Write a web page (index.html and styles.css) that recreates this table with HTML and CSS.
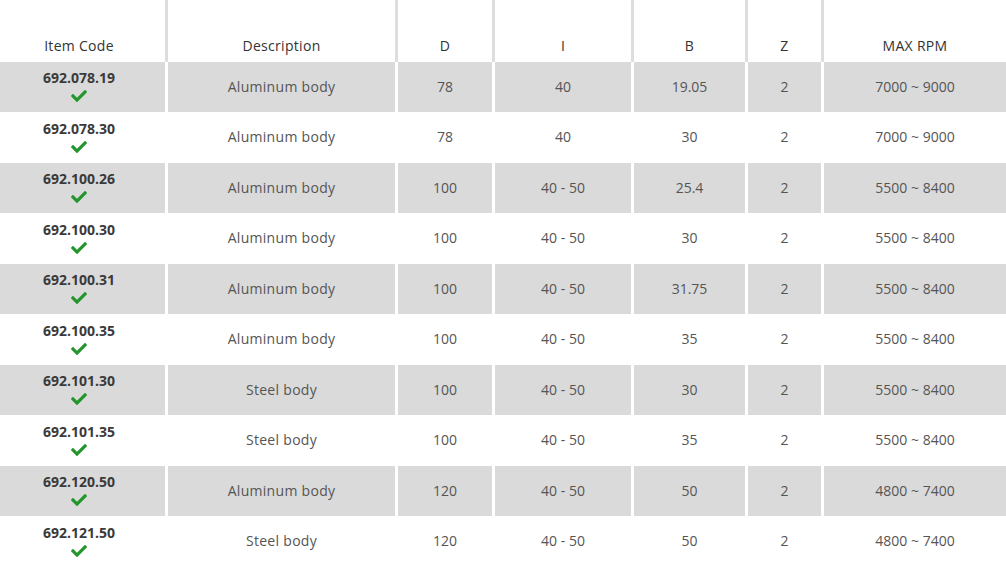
FILE: index.html
```html
<!DOCTYPE html>
<html>
<head>
<meta charset="utf-8">
<link rel="stylesheet" href="styles.css">
</head>
<body>
<div class="table">
  <div class="row head">
    <div class="cell c1">Item Code</div>
    <div class="cell">Description</div>
    <div class="cell">D</div>
    <div class="cell">I</div>
    <div class="cell">B</div>
    <div class="cell">Z</div>
    <div class="cell">MAX RPM</div>
  </div>
  <div class="row shade">
    <div class="cell c1"><span class="code">692.078.19</span><svg class="chk" viewBox="0 64 512 384"><path d="M173.898 439.404l-166.4-166.4c-9.997-9.997-9.997-26.206 0-36.204l36.203-36.204c9.997-9.998 26.207-9.998 36.204 0L192 312.69 432.095 72.596c9.997-9.997 26.207-9.997 36.204 0l36.203 36.204c9.997 9.997 9.997 26.206 0 36.204l-294.4 294.401c-9.998 9.997-26.207 9.997-36.204-.001z"/></svg></div>
    <div class="cell desc">Aluminum body</div><div class="cell">78</div><div class="cell">40</div><div class="cell">19.05</div><div class="cell">2</div><div class="cell">7000 ~ 9000</div>
  </div>
  <div class="row">
    <div class="cell c1"><span class="code">692.078.30</span><svg class="chk" viewBox="0 64 512 384"><path d="M173.898 439.404l-166.4-166.4c-9.997-9.997-9.997-26.206 0-36.204l36.203-36.204c9.997-9.998 26.207-9.998 36.204 0L192 312.69 432.095 72.596c9.997-9.997 26.207-9.997 36.204 0l36.203 36.204c9.997 9.997 9.997 26.206 0 36.204l-294.4 294.401c-9.998 9.997-26.207 9.997-36.204-.001z"/></svg></div>
    <div class="cell desc">Aluminum body</div><div class="cell">78</div><div class="cell">40</div><div class="cell">30</div><div class="cell">2</div><div class="cell">7000 ~ 9000</div>
  </div>
  <div class="row shade">
    <div class="cell c1"><span class="code">692.100.26</span><svg class="chk" viewBox="0 64 512 384"><path d="M173.898 439.404l-166.4-166.4c-9.997-9.997-9.997-26.206 0-36.204l36.203-36.204c9.997-9.998 26.207-9.998 36.204 0L192 312.69 432.095 72.596c9.997-9.997 26.207-9.997 36.204 0l36.203 36.204c9.997 9.997 9.997 26.206 0 36.204l-294.4 294.401c-9.998 9.997-26.207 9.997-36.204-.001z"/></svg></div>
    <div class="cell desc">Aluminum body</div><div class="cell">100</div><div class="cell">40 - 50</div><div class="cell">25.4</div><div class="cell">2</div><div class="cell">5500 ~ 8400</div>
  </div>
  <div class="row">
    <div class="cell c1"><span class="code">692.100.30</span><svg class="chk" viewBox="0 64 512 384"><path d="M173.898 439.404l-166.4-166.4c-9.997-9.997-9.997-26.206 0-36.204l36.203-36.204c9.997-9.998 26.207-9.998 36.204 0L192 312.69 432.095 72.596c9.997-9.997 26.207-9.997 36.204 0l36.203 36.204c9.997 9.997 9.997 26.206 0 36.204l-294.4 294.401c-9.998 9.997-26.207 9.997-36.204-.001z"/></svg></div>
    <div class="cell desc">Aluminum body</div><div class="cell">100</div><div class="cell">40 - 50</div><div class="cell">30</div><div class="cell">2</div><div class="cell">5500 ~ 8400</div>
  </div>
  <div class="row shade">
    <div class="cell c1"><span class="code">692.100.31</span><svg class="chk" viewBox="0 64 512 384"><path d="M173.898 439.404l-166.4-166.4c-9.997-9.997-9.997-26.206 0-36.204l36.203-36.204c9.997-9.998 26.207-9.998 36.204 0L192 312.69 432.095 72.596c9.997-9.997 26.207-9.997 36.204 0l36.203 36.204c9.997 9.997 9.997 26.206 0 36.204l-294.4 294.401c-9.998 9.997-26.207 9.997-36.204-.001z"/></svg></div>
    <div class="cell desc">Aluminum body</div><div class="cell">100</div><div class="cell">40 - 50</div><div class="cell">31.75</div><div class="cell">2</div><div class="cell">5500 ~ 8400</div>
  </div>
  <div class="row">
    <div class="cell c1"><span class="code">692.100.35</span><svg class="chk" viewBox="0 64 512 384"><path d="M173.898 439.404l-166.4-166.4c-9.997-9.997-9.997-26.206 0-36.204l36.203-36.204c9.997-9.998 26.207-9.998 36.204 0L192 312.69 432.095 72.596c9.997-9.997 26.207-9.997 36.204 0l36.203 36.204c9.997 9.997 9.997 26.206 0 36.204l-294.4 294.401c-9.998 9.997-26.207 9.997-36.204-.001z"/></svg></div>
    <div class="cell desc">Aluminum body</div><div class="cell">100</div><div class="cell">40 - 50</div><div class="cell">35</div><div class="cell">2</div><div class="cell">5500 ~ 8400</div>
  </div>
  <div class="row shade">
    <div class="cell c1"><span class="code">692.101.30</span><svg class="chk" viewBox="0 64 512 384"><path d="M173.898 439.404l-166.4-166.4c-9.997-9.997-9.997-26.206 0-36.204l36.203-36.204c9.997-9.998 26.207-9.998 36.204 0L192 312.69 432.095 72.596c9.997-9.997 26.207-9.997 36.204 0l36.203 36.204c9.997 9.997 9.997 26.206 0 36.204l-294.4 294.401c-9.998 9.997-26.207 9.997-36.204-.001z"/></svg></div>
    <div class="cell desc">Steel body</div><div class="cell">100</div><div class="cell">40 - 50</div><div class="cell">30</div><div class="cell">2</div><div class="cell">5500 ~ 8400</div>
  </div>
  <div class="row">
    <div class="cell c1"><span class="code">692.101.35</span><svg class="chk" viewBox="0 64 512 384"><path d="M173.898 439.404l-166.4-166.4c-9.997-9.997-9.997-26.206 0-36.204l36.203-36.204c9.997-9.998 26.207-9.998 36.204 0L192 312.69 432.095 72.596c9.997-9.997 26.207-9.997 36.204 0l36.203 36.204c9.997 9.997 9.997 26.206 0 36.204l-294.4 294.401c-9.998 9.997-26.207 9.997-36.204-.001z"/></svg></div>
    <div class="cell desc">Steel body</div><div class="cell">100</div><div class="cell">40 - 50</div><div class="cell">35</div><div class="cell">2</div><div class="cell">5500 ~ 8400</div>
  </div>
  <div class="row shade">
    <div class="cell c1"><span class="code">692.120.50</span><svg class="chk" viewBox="0 64 512 384"><path d="M173.898 439.404l-166.4-166.4c-9.997-9.997-9.997-26.206 0-36.204l36.203-36.204c9.997-9.998 26.207-9.998 36.204 0L192 312.69 432.095 72.596c9.997-9.997 26.207-9.997 36.204 0l36.203 36.204c9.997 9.997 9.997 26.206 0 36.204l-294.4 294.401c-9.998 9.997-26.207 9.997-36.204-.001z"/></svg></div>
    <div class="cell desc">Aluminum body</div><div class="cell">120</div><div class="cell">40 - 50</div><div class="cell">50</div><div class="cell">2</div><div class="cell">4800 ~ 7400</div>
  </div>
  <div class="row">
    <div class="cell c1"><span class="code">692.121.50</span><svg class="chk" viewBox="0 64 512 384"><path d="M173.898 439.404l-166.4-166.4c-9.997-9.997-9.997-26.206 0-36.204l36.203-36.204c9.997-9.998 26.207-9.998 36.204 0L192 312.69 432.095 72.596c9.997-9.997 26.207-9.997 36.204 0l36.203 36.204c9.997 9.997 9.997 26.206 0 36.204l-294.4 294.401c-9.998 9.997-26.207 9.997-36.204-.001z"/></svg></div>
    <div class="cell desc">Steel body</div><div class="cell">120</div><div class="cell">40 - 50</div><div class="cell">50</div><div class="cell">2</div><div class="cell">4800 ~ 7400</div>
  </div>
</div>
</body>
</html>
```

FILE: styles.css
```css
html, body {
  margin: 0;
  padding: 0;
  background: #ffffff;
}
body {
  font-family: "Open Sans", "Liberation Sans", sans-serif;
  font-size: 14px;
  color: #555555;
}
.table {
  display: flex;
  flex-direction: column;
  width: 1006px;
}
.row {
  display: grid;
  grid-template-columns: 165px 227px 94px 136px 111px 73px 1fr;
  column-gap: 3px;
  height: 49.5px;
  margin-bottom: 1px;
}
.row.head {
  height: 62px;
  margin-bottom: 0;
  background: #dddddd;
}
.cell {
  display: flex;
  flex-direction: column;
  align-items: center;
  justify-content: center;
  text-align: center;
  background: #ffffff;
  line-height: 18px;
}
.cell.desc {
  letter-spacing: 0.3px;
}
.c1 {
  padding-right: 7px;
}
.row.shade .cell {
  background: #dadada;
}
.head .cell {
  justify-content: flex-end;
  padding-bottom: 7px;
  color: #333333;
  font-weight: 500;
  letter-spacing: 0.3px;
}
.code {
  font-weight: 700;
  color: #3a3a3a;
  line-height: 18px;
  margin-top: -2px;
}
.chk {
  width: 16px;
  height: 12px;
  fill: #22962c;
  margin-top: 3px;
}
```
